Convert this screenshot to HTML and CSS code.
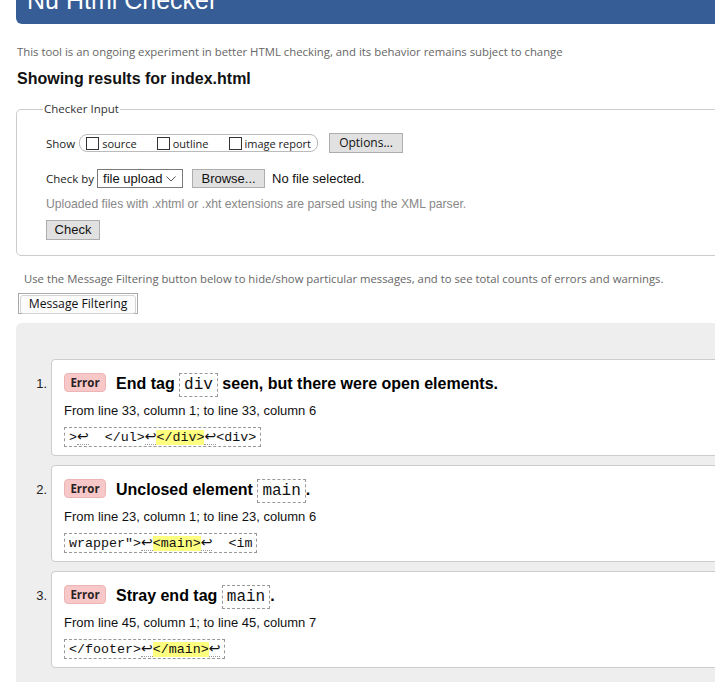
FILE: index.html
```html
<!DOCTYPE html>
<html lang="en">
<head>
<meta charset="utf-8">
<title>Showing results for index.html - Nu Html Checker</title>
<link rel="stylesheet" href="styles.css">
</head>
<body>
<div class="page">
  <header class="banner"><h1 class="banner-title">Nu Html Checker</h1></header>
  <p class="intro">This tool is an ongoing experiment in better HTML checking, and its behavior remains subject to change</p>
  <h2 class="results-title">Showing results for index.html</h2>

  <fieldset class="checker">
    <legend class="checker-legend">Checker Input</legend>
    <div class="row row-show">
      <span class="label">Show</span>
      <span class="pill">
        <label class="opt"><span class="cb"></span>source</label>
        <label class="opt"><span class="cb"></span>outline</label>
        <label class="opt"><span class="cb"></span>image report</label>
      </span>
      <button class="btn btn-options" type="button">Options...</button>
    </div>
    <div class="row row-by">
      <span class="label">Check by</span>
      <span class="select">file upload
        <svg class="chev" width="10" height="6" viewBox="0 0 10 6"><path d="M0.5 0.5 L5 5 L9.5 0.5" fill="none" stroke="#555" stroke-width="1"/></svg>
      </span>
      <button class="btn btn-browse" type="button">Browse...</button>
      <span class="nofile">No file selected.</span>
    </div>
    <p class="hint">Uploaded files with .xhtml or .xht extensions are parsed using the XML parser.</p>
    <button class="btn btn-check" type="button">Check</button>
  </fieldset>

  <p class="filter-hint">Use the Message Filtering button below to hide/show particular messages, and to see total counts of errors and warnings.</p>
  <button class="btn-filter" type="button"><span>Message Filtering</span></button>

  <div class="results">
    <ol class="msgs">
      <li class="msg">
        <span class="num">1.</span>
        <div class="card">
          <p class="msg-title"><span class="badge">Error</span><strong>End tag <code class="tag">div</code> seen, but there were open elements.</strong></p>
          <p class="loc">From line 33, column 1; to line 33, column 6</p>
          <code class="extract">&gt;<span class="lf">↩</span>  &lt;/ul&gt;<span class="lf">↩</span><mark>&lt;/div&gt;</mark><span class="lf">↩</span>&lt;div&gt;</code>
        </div>
      </li>
      <li class="msg">
        <span class="num">2.</span>
        <div class="card">
          <p class="msg-title"><span class="badge">Error</span><strong>Unclosed element <code class="tag">main</code>.</strong></p>
          <p class="loc">From line 23, column 1; to line 23, column 6</p>
          <code class="extract">wrapper"&gt;<span class="lf">↩</span><mark>&lt;main&gt;</mark><span class="lf">↩</span>  &lt;im</code>
        </div>
      </li>
      <li class="msg">
        <span class="num">3.</span>
        <div class="card">
          <p class="msg-title"><span class="badge">Error</span><strong>Stray end tag <code class="tag">main</code>.</strong></p>
          <p class="loc">From line 45, column 1; to line 45, column 7</p>
          <code class="extract">&lt;/footer&gt;<span class="lf">↩</span><mark>&lt;/main&gt;</mark><span class="lf">↩</span></code>
        </div>
      </li>
    </ol>
  </div>
</div>
</body>
</html>
```

FILE: styles.css
```css
html, body {
  margin: 0;
  padding: 0;
  background: #fff;
  overflow: hidden;
}
body {
  width: 715px;
  height: 682px;
  font-family: "Liberation Sans", Arial, sans-serif;
  color: #222;
}
.page {
  width: 780px;
  padding-left: 16px;
}

/* banner */
.banner {
  height: 24px;
  background: #365d95;
  border-bottom-left-radius: 6px;
  overflow: hidden;
}
.banner-title {
  margin: -12px 0 0 11px;
  font-family: "Liberation Sans", Arial, sans-serif;
  font-weight: normal;
  font-size: 25px;
  line-height: 24px;
  color: #fff;
}

.intro {
  margin: 20px 0 0 1px;
  font-family: "Open Sans", sans-serif;
  font-size: 11.35px;
  line-height: 16px;
  color: #666;
}
.results-title {
  margin: 9px 0 0 1px;
  font-size: 16px;
  line-height: 20px;
  font-weight: bold;
  color: #111;
}

/* checker fieldset */
.checker {
  margin: 12px 0 0 0;
  padding: 0 0 15px 29px;
  border: 1px solid #ccc;
  border-radius: 5px;
  min-width: 0;
}
.checker-legend {
  margin-left: -3px;
  padding: 0 1px;
  font-family: "Open Sans", sans-serif;
  font-size: 11.5px;
  line-height: 16px;
  color: #333;
}
.row {
  display: flex;
  align-items: center;
  height: 20px;
}
.row-show { margin-top: 16px; }
.row-by { margin-top: 15px; }
.label {
  font-family: "Open Sans", sans-serif;
  font-size: 11.5px;
  color: #222;
}
.pill {
  display: flex;
  align-items: center;
  height: 16px;
  margin-left: 4px;
  padding: 0 6px 0 6px;
  border: 1px solid #bbb;
  border-radius: 8px;
  gap: 20px;
}
.opt {
  display: flex;
  align-items: center;
  font-family: "Open Sans", sans-serif;
  font-size: 11px;
  color: #222;
}
.cb {
  width: 11px;
  height: 11px;
  border: 1px solid #333;
  background: #fff;
  margin-right: 3px;
}
.btn {
  font-family: "Liberation Sans", Arial, sans-serif;
  font-size: 13px;
  color: #111;
  background: #e1e1e1;
  border: 1px solid #adadad;
  border-radius: 0;
  padding: 0;
  height: 20px;
  line-height: 18px;
}
.btn-options {
  margin-left: 11px;
  width: 74px;
  font-family: "Open Sans", sans-serif;
  font-size: 12px;
}
.select {
  display: flex;
  align-items: center;
  height: 19px;
  box-sizing: border-box;
  width: 86px;
  margin-left: 3px;
  padding-left: 5px;
  border: 1px solid #7a7a7a;
  background: #fff;
  font-size: 13px;
  color: #111;
  position: relative;
}
.chev {
  position: absolute;
  right: 6px;
  top: 6px;
}
.btn-browse {
  margin-left: 9px;
  width: 73px;
  height: 19px;
}
.nofile {
  margin-left: 7px;
  font-size: 13px;
  color: #111;
}
.hint {
  margin: 8px 0 0 0;
  font-size: 12.2px;
  line-height: 16px;
  color: #888;
}
.btn-check {
  display: block;
  margin-top: 8px;
  width: 54px;
}

.filter-hint {
  margin: 15px 0 0 8px;
  font-family: "Open Sans", sans-serif;
  font-size: 11.3px;
  line-height: 16px;
  color: #666;
}
.btn-filter {
  display: block;
  margin: 6px 0 0 2px;
  padding: 1px;
  width: 120px;
  height: 21px;
  background: #fff;
  border: 1px solid #a9a9a9;
  border-radius: 0;
}
.btn-filter span {
  display: block;
  height: 17px;
  line-height: 16px;
  border: 1px solid #d4d4d4;
  border-radius: 3px;
  background: #fcfcfc;
  font-family: "Open Sans", sans-serif;
  font-size: 12.2px;
  color: #111;
}

/* results */
.results {
  margin-top: 9px;
  background: #eee;
  border-top-left-radius: 6px;
  padding: 36px 0 20px 0;
}
.msgs {
  list-style: none;
  margin: 0;
  padding: 0;
}
.msg {
  display: flex;
  margin-bottom: 9px;
}
.num {
  width: 31px;
  padding-top: 13px;
  padding-right: 4px;
  text-align: right;
  font-size: 13px;
  line-height: 24px;
  color: #222;
}
.card {
  flex: 1;
  background: #fff;
  border: 1px solid #ccc;
  border-radius: 4px;
  padding: 12px 12px 8px 12px;
}
.msg-title {
  margin: 0;
  height: 24px;
  line-height: 24px;
  font-size: 16px;
  color: #000;
  white-space: nowrap;
}
.badge {
  display: inline-block;
  vertical-align: top;
  margin-top: 1px;
  box-sizing: border-box;
  width: 42px;
  height: 19px;
  line-height: 17px;
  text-align: center;
  background: #f8c8c8;
  border: 1px solid #ecb4b4;
  border-radius: 4px;
  font-family: "Open Sans", sans-serif;
  font-size: 11.5px;
  font-weight: 700;
  color: #2a2222;
  margin-right: 10px;
}
.msg-title strong {
  font-weight: bold;
}
.tag {
  font-family: "Liberation Mono", "Courier New", monospace;
  font-weight: normal;
  font-size: 16px;
  padding: 2px 4px;
  border: 1px dashed #999;
  color: #111;
}
.loc {
  margin: 7px 0 0 0;
  font-size: 13px;
  line-height: 16px;
  color: #111;
}
.extract {
  display: block;
  width: fit-content;
  margin-top: 8px;
  padding: 0 4px;
  height: 20px;
  box-sizing: border-box;
  line-height: 18px;
  border: 1px dashed #999;
  font-family: "Liberation Mono", "Courier New", monospace;
  font-size: 13.33px;
  color: #111;
  white-space: pre;
}
.extract mark {
  background: #ffff80;
  color: #111;
}
.lf {
  font-family: "DejaVu Sans", sans-serif;
  font-size: 14px;
  line-height: 16px;
  border-bottom: 1px dotted #999;
}
```
